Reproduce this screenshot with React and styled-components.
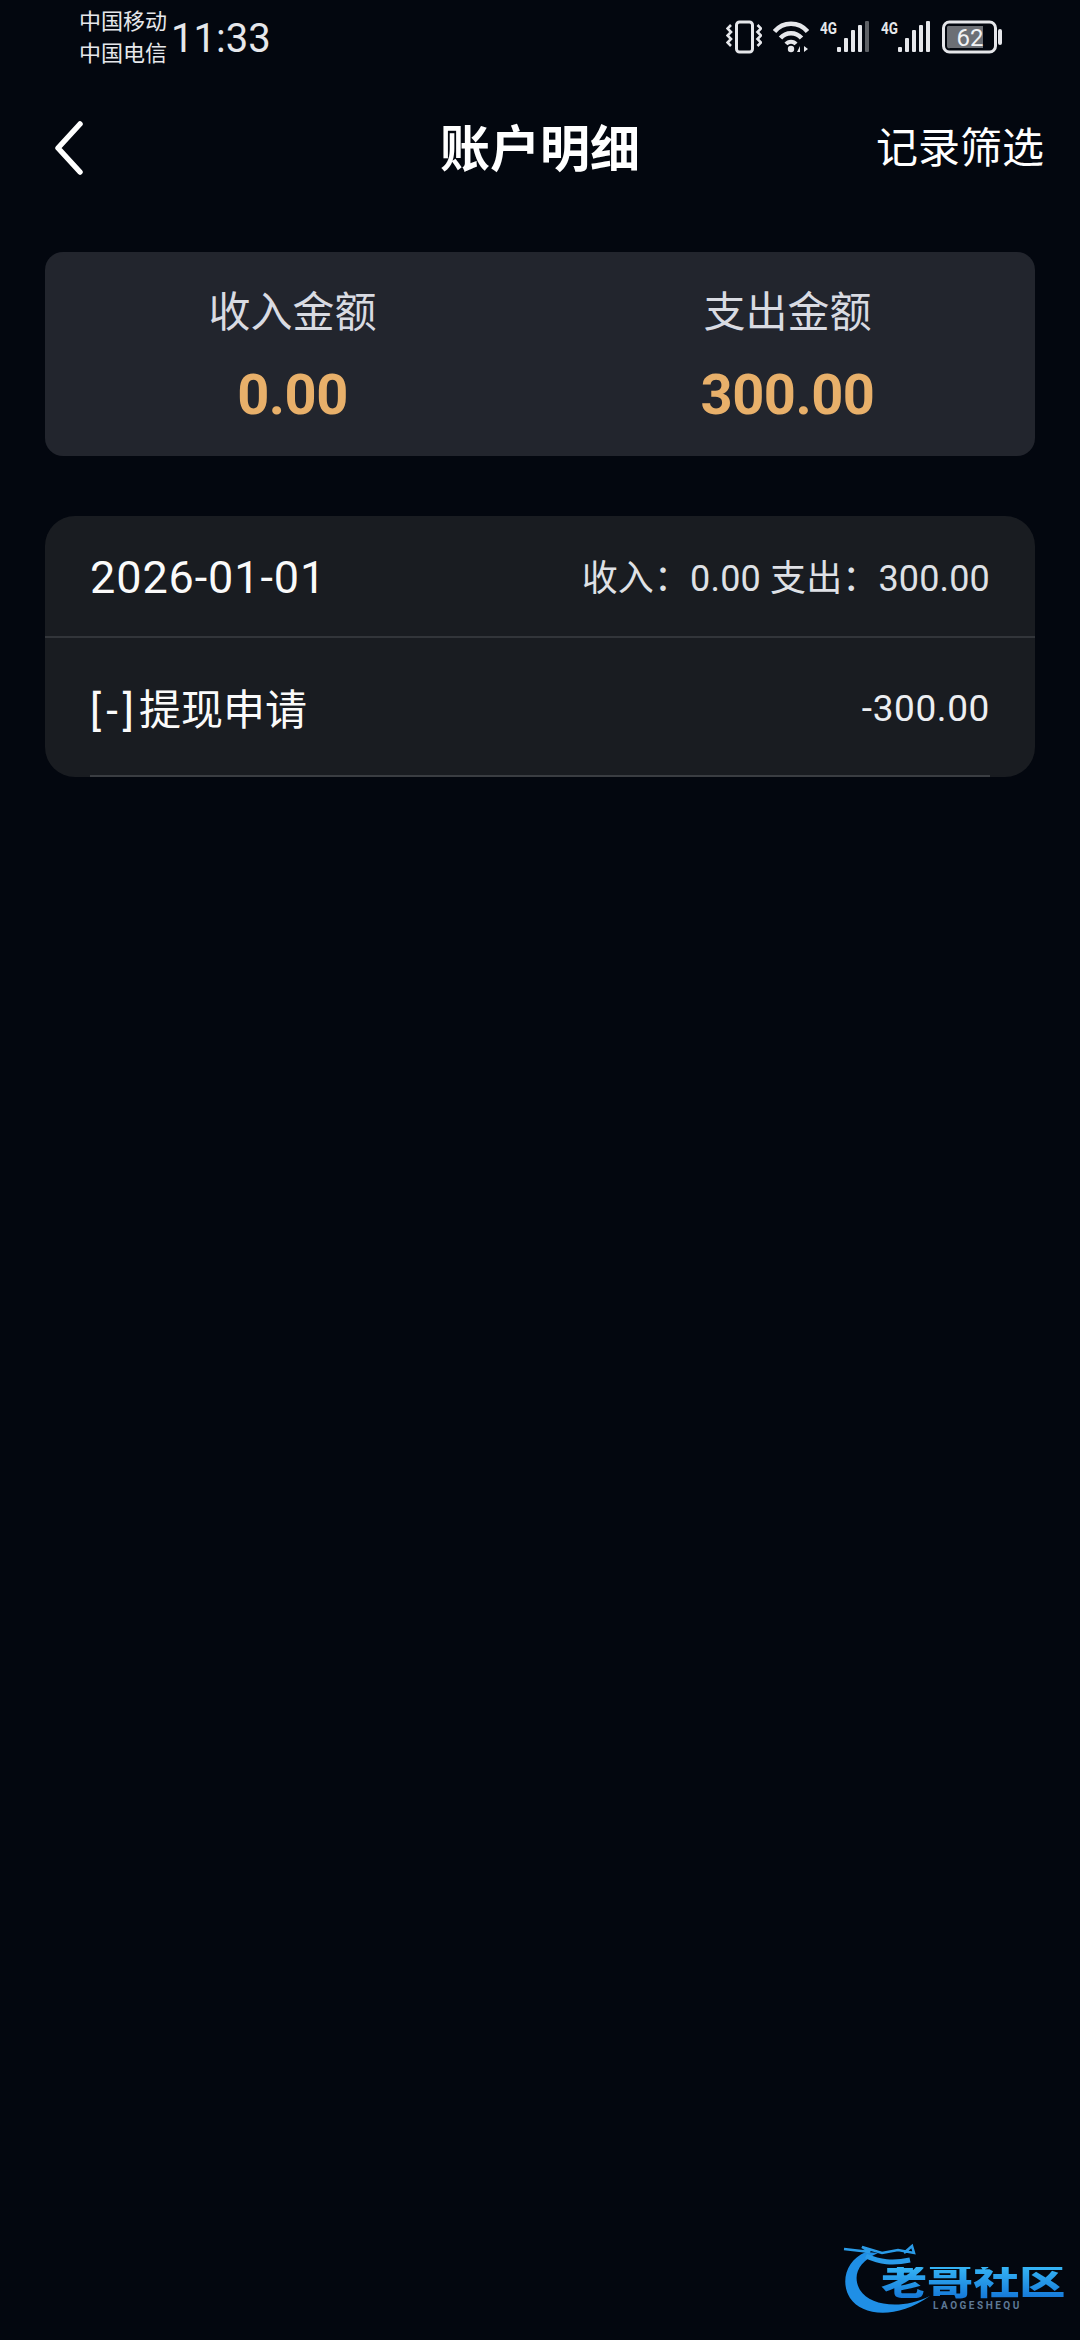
import React from "react";
import styled, { createGlobalStyle } from "styled-components";

const GlobalStyle = createGlobalStyle`
  html, body {
    margin: 0;
    padding: 0;
    background: #03070f;
  }
  * {
    box-sizing: border-box;
  }
`;

const Page = styled.div`
  position: relative;
  width: 1080px;
  height: 2340px;
  overflow: hidden;
  background: #03070f;
  font-family: Roboto, "Noto Sans CJK SC", sans-serif;
  color: #fff;
`;

const StatusBar = styled.div`
  height: 78px;
  display: flex;
  align-items: flex-start;
  justify-content: space-between;
  padding: 4px 78px 0 79px;
`;

const StatusLeft = styled.div`
  display: flex;
  align-items: center;
  gap: 4px;
`;

const Carriers = styled.div`
  font-size: 22px;
  line-height: 32px;
  color: #e6e7eb;
`;

const Clock = styled.div`
  padding-top: 2px;
  font-size: 40px;
  line-height: 66px;
  color: #e6e7eb;
`;

const StatusIcons = styled.div`
  height: 50px;
  display: flex;
  align-items: flex-end;
  gap: 11px;
  color: #e6e7eb;

  svg {
    display: block;
  }
`;

const NavBar = styled.header`
  height: 140px;
  display: grid;
  grid-template-columns: 1fr auto 1fr;
  align-items: center;
  padding: 0 36px;
`;

const BackIcon = styled.svg`
  display: block;
  width: 36px;
  height: 54px;
  margin-left: 14px;
`;

const Title = styled.h1`
  margin: 0;
  padding-top: 4px;
  font-size: 50px;
  font-weight: 700;
  line-height: 60px;
`;

const Filter = styled.div`
  justify-self: end;
  padding-top: 2px;
  font-size: 42px;
  line-height: 60px;
`;

const Main = styled.main`
  display: flex;
  flex-direction: column;
  gap: 60px;
  padding: 34px 45px 0;
`;

const SummaryCard = styled.section`
  height: 204px;
  display: grid;
  grid-template-columns: 1fr 1fr;
  background: #22252d;
  border-radius: 18px;
`;

const SummaryCol = styled.div`
  display: flex;
  flex-direction: column;
  align-items: center;
  padding-top: 33px;
`;

const SummaryLabel = styled.div`
  font-size: 42px;
  line-height: 56px;
  color: #d9dbe2;
`;

const SummaryValue = styled.div`
  margin-top: 21px;
  font-size: 56px;
  font-weight: 700;
  line-height: 66px;
  letter-spacing: -0.5px;
  color: #e8b06a;
`;

const ListCard = styled.section`
  height: 261px;
  background: #191c21;
  border-radius: 30px;
  overflow: hidden;
`;

const DayHeader = styled.div`
  height: 122px;
  display: flex;
  align-items: center;
  justify-content: space-between;
  padding: 0 45px 2px;
  border-bottom: 2px solid #32353a;
`;

const DayDate = styled.div`
  padding-top: 5px;
  font-size: 45px;
  letter-spacing: 0.9px;
  color: #fafafa;
`;

const DayTotals = styled.div`
  font-size: 36px;
  letter-spacing: 0.15px;
  color: #dfe1e6;
`;

const Record = styled.div`
  height: 139px;
  margin: 0 45px;
  display: flex;
  align-items: center;
  justify-content: space-between;
  border-bottom: 2px solid #3a3d42;
`;

const RecordName = styled.div`
  font-size: 42px;
  color: #fafafa;
`;

const RecordMark = styled.span`
  letter-spacing: 5px;
`;

const RecordAmount = styled.div`
  padding-top: 4px;
  font-size: 37px;
  letter-spacing: 0.6px;
  color: #eceef1;
`;

const Watermark = styled.div`
  position: absolute;
  right: 0;
  bottom: 0;
  width: 260px;
  height: 120px;
`;

const WatermarkArt = styled.svg`
  display: block;
  width: 260px;
  height: 120px;
`;

const WatermarkName = styled.div`
  position: absolute;
  left: 61px;
  top: 47px;
  width: 146px;
  font-size: 36px;
  font-weight: 900;
  line-height: 32px;
  white-space: nowrap;
  transform: scaleX(1.28);
  transform-origin: left center;
  background: linear-gradient(180deg, #35b4f5, #1477d8);
  -webkit-background-clip: text;
  background-clip: text;
  color: transparent;
`;

const WatermarkSub = styled.div`
  position: absolute;
  left: 113px;
  top: 80px;
  font-size: 10px;
  font-weight: 700;
  line-height: 12px;
  letter-spacing: 2.5px;
  color: #5d7896;
`;

const VibrateIcon = () => (
  <svg width="36" height="34" viewBox="0 0 36 34" fill="none" stroke="currentColor">
    <rect x="10.5" y="2" width="16" height="30" rx="3" strokeWidth="3" />
    <path d="M5 5 L1.5 8.5 L5 12 L1.5 15.5 L5 19 L1.5 22.5 L5 26" strokeWidth="2.6" />
    <path d="M31.5 5 L35 8.5 L31.5 12 L35 15.5 L31.5 19 L35 22.5 L31.5 26" strokeWidth="2.6" />
  </svg>
);

const WifiIcon = () => (
  <svg width="36" height="34" viewBox="0 0 36 34" fill="none" stroke="currentColor">
    <path d="M1.5 11.5 C10 1 26 1 34.5 11.5" strokeWidth="4.5" />
    <path d="M7.5 18 C13 11.5 23 11.5 28.5 18" strokeWidth="4.5" />
    <path d="M13 24 C15.5 21 20.5 21 23 24" strokeWidth="4" />
    <circle cx="18" cy="29" r="3.2" fill="currentColor" stroke="none" />
    <path d="M27 32 L27 26 L24 32 Z M31 26 L31 32 L35 29 Z" fill="currentColor" stroke="none" />
  </svg>
);

const bars = [5, 14, 22, 27, 31];

// taller than the other icons so the 4G text box is not clipped at the top
const SignalIcon = ({ weak }) => (
  <svg width="50" height="40" viewBox="0 -6 50 40">
    <text x="0" y="14" fontFamily="Roboto, sans-serif" fontSize="16" fontWeight="700" fill="currentColor" textLength="17" lengthAdjust="spacingAndGlyphs">
      4G
    </text>
    {bars.map((h, i) => (
      <rect
        key={i}
        x={17 + i * 7}
        y={32 - h}
        width="4"
        height={h}
        rx="1"
        fill={weak && i === 4 ? "#5e6166" : "currentColor"}
      />
    ))}
  </svg>
);

const BatteryIcon = () => (
  <svg width="60" height="34" viewBox="0 0 60 34">
    <rect x="1.5" y="2" width="52" height="30" rx="6" fill="none" stroke="currentColor" strokeWidth="3" />
    <path d="M8 6 H41 V28 H8 A2 2 0 0 1 5 26 V8 A2 2 0 0 1 8 6 Z" fill="#6c6f75" />
    <text x="28" y="26" textAnchor="middle" fontFamily="Roboto, sans-serif" fontSize="24" fill="#f2f3f5">
      62
    </text>
    <rect x="56" y="9" width="4" height="16" rx="2" fill="currentColor" />
  </svg>
);

const App = () => (
  <Page>
    <GlobalStyle />
    <StatusBar>
      <StatusLeft>
        <Carriers>
          <div>中国移动</div>
          <div>中国电信</div>
        </Carriers>
        <Clock>11:33</Clock>
      </StatusLeft>
      <StatusIcons>
        <VibrateIcon />
        <WifiIcon />
        <SignalIcon weak />
        <SignalIcon />
        <BatteryIcon />
      </StatusIcons>
    </StatusBar>

    <NavBar>
      <BackIcon viewBox="0 0 36 54" fill="none" stroke="#fff" strokeWidth="5.5" strokeLinecap="round" strokeLinejoin="round">
        <path d="M30 3 L8 27 L30 51" />
      </BackIcon>
      <Title>账户明细</Title>
      <Filter>记录筛选</Filter>
    </NavBar>

    <Main>
      <SummaryCard>
        <SummaryCol>
          <SummaryLabel>收入金额</SummaryLabel>
          <SummaryValue>0.00</SummaryValue>
        </SummaryCol>
        <SummaryCol>
          <SummaryLabel>支出金额</SummaryLabel>
          <SummaryValue>300.00</SummaryValue>
        </SummaryCol>
      </SummaryCard>

      <ListCard>
        <DayHeader>
          <DayDate>2026-01-01</DayDate>
          <DayTotals>收入：0.00 支出：300.00</DayTotals>
        </DayHeader>
        <Record>
          <RecordName>
            <RecordMark>[-]</RecordMark>提现申请
          </RecordName>
          <RecordAmount>-300.00</RecordAmount>
        </Record>
      </ListCard>
    </Main>

    <Watermark>
      <WatermarkArt viewBox="0 0 260 120" fill="none">
        <path d="M46 32 C26 40 20 62 30 78 C42 96 76 100 110 76 C82 90 50 86 40 70 C32 56 38 42 58 33 Z" fill="#1f8fe6" />
        <path d="M24 29 L50 32 L42 27 L62 33 L78 30 L94 33 L92 26 L84 33" stroke="#2a9be8" strokeWidth="2.5" />
        <path d="M46 36 C60 42 72 44 90 40" stroke="#2a9be8" strokeWidth="5" />
      </WatermarkArt>
      <WatermarkName>老哥社区</WatermarkName>
      <WatermarkSub>LAOGESHEQU</WatermarkSub>
    </Watermark>
  </Page>
);

export default App;
